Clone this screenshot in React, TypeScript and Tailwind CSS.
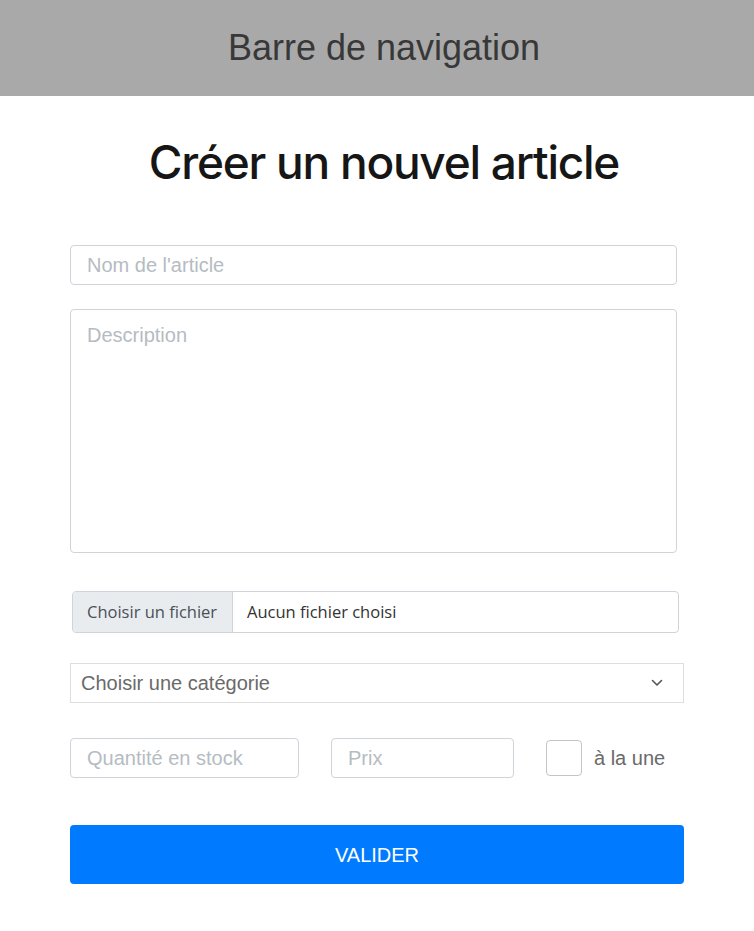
export default function App() {
  return (
    <div className="min-h-[931px] w-[754px] bg-white font-['Liberation_Sans',Arial,sans-serif]">
      <nav className="flex h-[96px] items-center justify-center bg-[#a9a9a9] pl-[14px]">
        <span className="text-[36px] leading-none text-[#383838]">Barre de navigation</span>
      </nav>

      <main className="px-[70px]">
        <h1 className="mt-[39px] pl-[14px] text-center font-['Inter',sans-serif] text-[46px] leading-[1.2] font-medium tracking-[-1.25px] text-[#161616]">
          Créer un nouvel article
        </h1>

        <form className="mt-[55px] flex flex-col">
          <input
            className="h-[40px] w-[607px] rounded-[4px] border border-[#ced4da] px-[16px] text-[20px] text-[#495057] outline-none placeholder:text-[#b5bcc2]"
            placeholder="Nom de l'article"
          />
          <textarea
            className="mt-[24px] h-[244px] w-[607px] resize-none rounded-[4px] border border-[#ced4da] px-[16px] py-[14px] text-[20px] leading-[1.15] text-[#495057] outline-none placeholder:text-[#b5bcc2]"
            placeholder="Description"
          />

          <div className="mt-[38px] ml-[2px] flex h-[42px] w-[607px] items-stretch overflow-hidden rounded-[4px] border border-[#ced4da] font-['Open_Sans',sans-serif] text-[16.5px] text-[#495057]">
            <span className="flex w-[160px] items-center border-r border-[#ced4da] bg-[#e9ecef] pl-[14px]">Choisir un fichier</span>
            <span className="flex items-center pl-[14px] text-[#333]">Aucun fichier choisi</span>
          </div>

          <div className="mt-[30px] flex h-[40px] w-[614px] items-center justify-between border border-[#dedede] pr-[20px] pl-[10px] text-[20px] text-[#6a6a6a]">
            <span>Choisir une catégorie</span>
            <svg width="12" height="8" viewBox="0 0 12 8" fill="none">
              <path d="M1.5 1.5 6 6l4.5-4.5" stroke="#555" strokeWidth="1.6" strokeLinecap="round" strokeLinejoin="round" />
            </svg>
          </div>

          <div className="mt-[35px] flex items-center">
            <input
              className="h-[40px] w-[229px] rounded-[4px] border border-[#ced4da] px-[16px] text-[20px] outline-none placeholder:text-[#b5bcc2]"
              placeholder="Quantité en stock"
            />
            <input
              className="ml-[32px] h-[40px] w-[183px] rounded-[4px] border border-[#ced4da] px-[16px] text-[20px] outline-none placeholder:text-[#b5bcc2]"
              placeholder="Prix"
            />
            <span className="ml-[32px] h-[36px] w-[36px] rounded-[4px] border border-[#c4c4c4] bg-white" />
            <span className="ml-[12px] text-[20px] text-[#6a6a6a]">à la une</span>
          </div>

          <button
            type="button"
            className="mt-[47px] h-[59px] w-[614px] rounded-[4px] bg-[#007bff] text-[20px] text-white"
          >
            VALIDER
          </button>
        </form>
      </main>
    </div>
  );
}
